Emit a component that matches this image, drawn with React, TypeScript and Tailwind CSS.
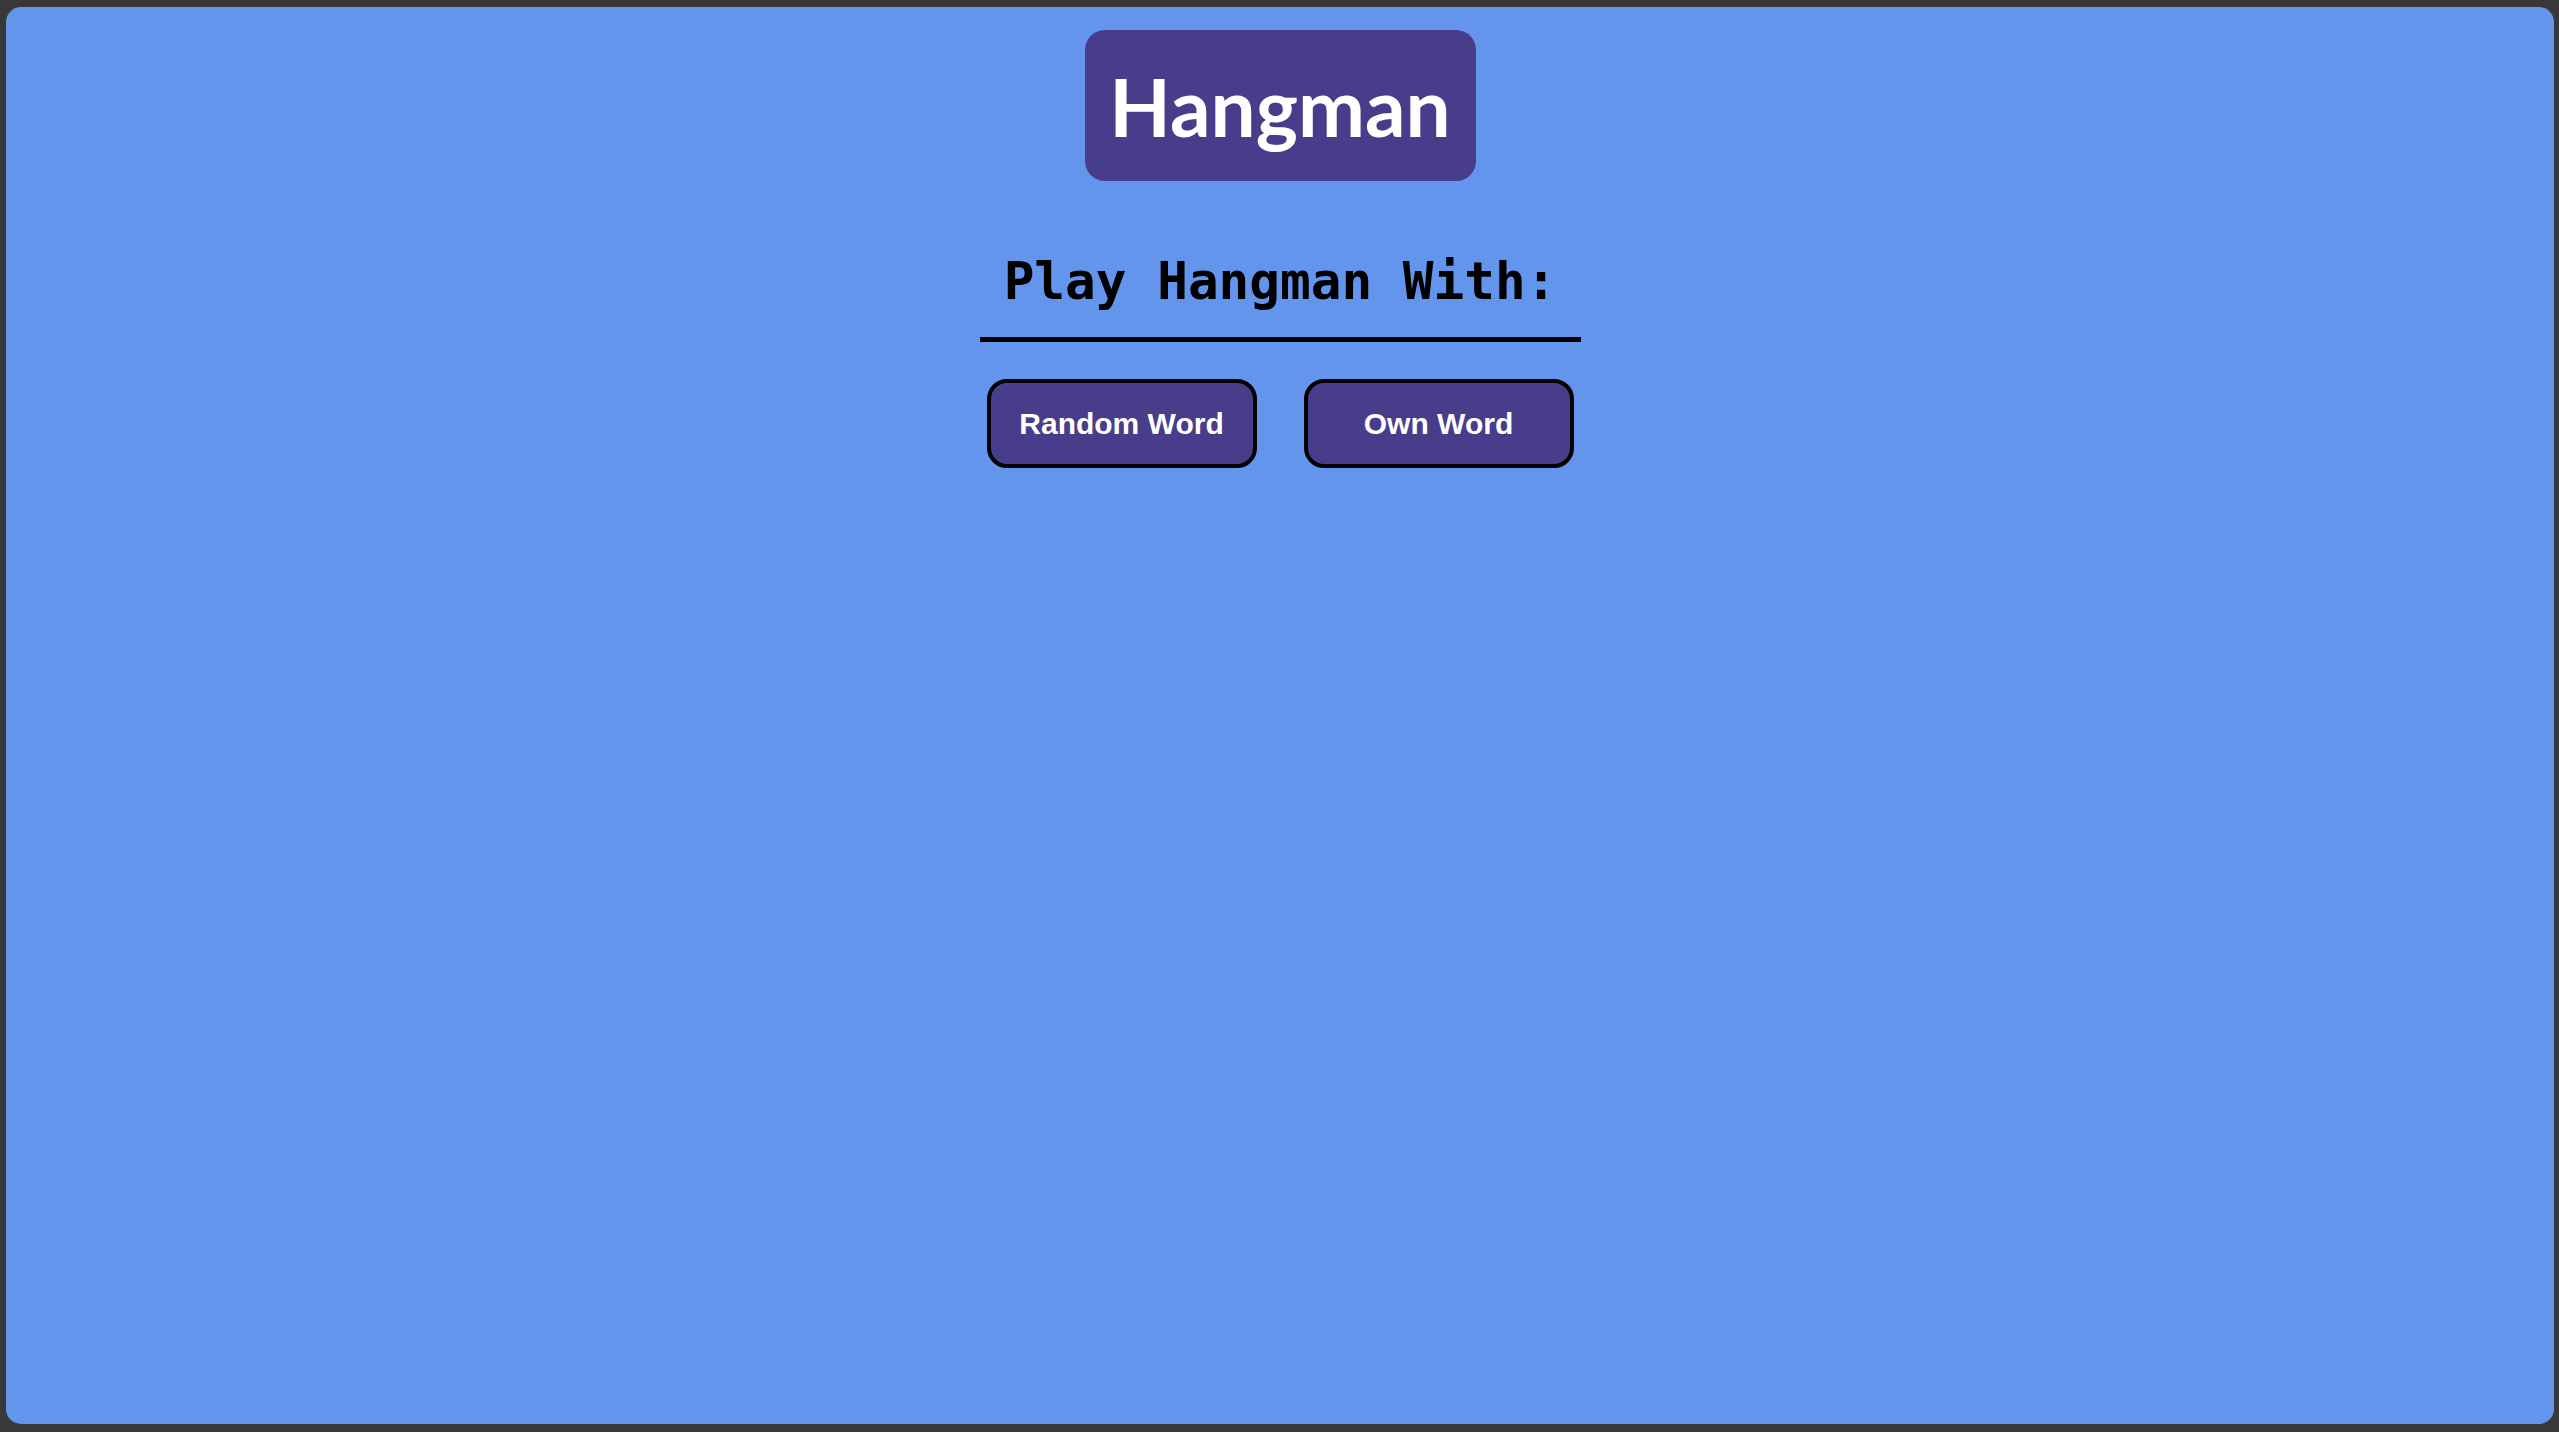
export default function App() {
  return (
    <div className="h-screen w-full bg-[#383838] pt-[7px] pl-[6px] pr-[5px] pb-[8px]">
      <div className="h-full w-full rounded-[15px] bg-[#6495ED] flex flex-col items-center">
        <div className="mt-[23px] h-[151px] w-[391px] rounded-[20px] bg-[#483D8B] flex items-center justify-center">
          <span className="text-white font-bold text-[80px] leading-none font-['Lato',sans-serif]">Hangman</span>
        </div>
        <h2 className="mt-[71px] w-[601px] text-center text-black font-bold text-[51px] leading-[60px] pb-[25px] border-b-[5px] border-black font-['DejaVu_Sans_Mono',monospace]">
          Play Hangman With:
        </h2>
        <div className="mt-[37px] flex gap-[47px]">
          <button className="w-[270px] h-[89px] rounded-[20px] border-4 border-black bg-[#483D8B] text-white font-bold text-[30px] font-['Liberation_Sans',Arial,sans-serif]">
            Random Word
          </button>
          <button className="w-[270px] h-[89px] rounded-[20px] border-4 border-black bg-[#483D8B] text-white font-bold text-[30px] font-['Liberation_Sans',Arial,sans-serif]">
            Own Word
          </button>
        </div>
      </div>
    </div>
  );
}
